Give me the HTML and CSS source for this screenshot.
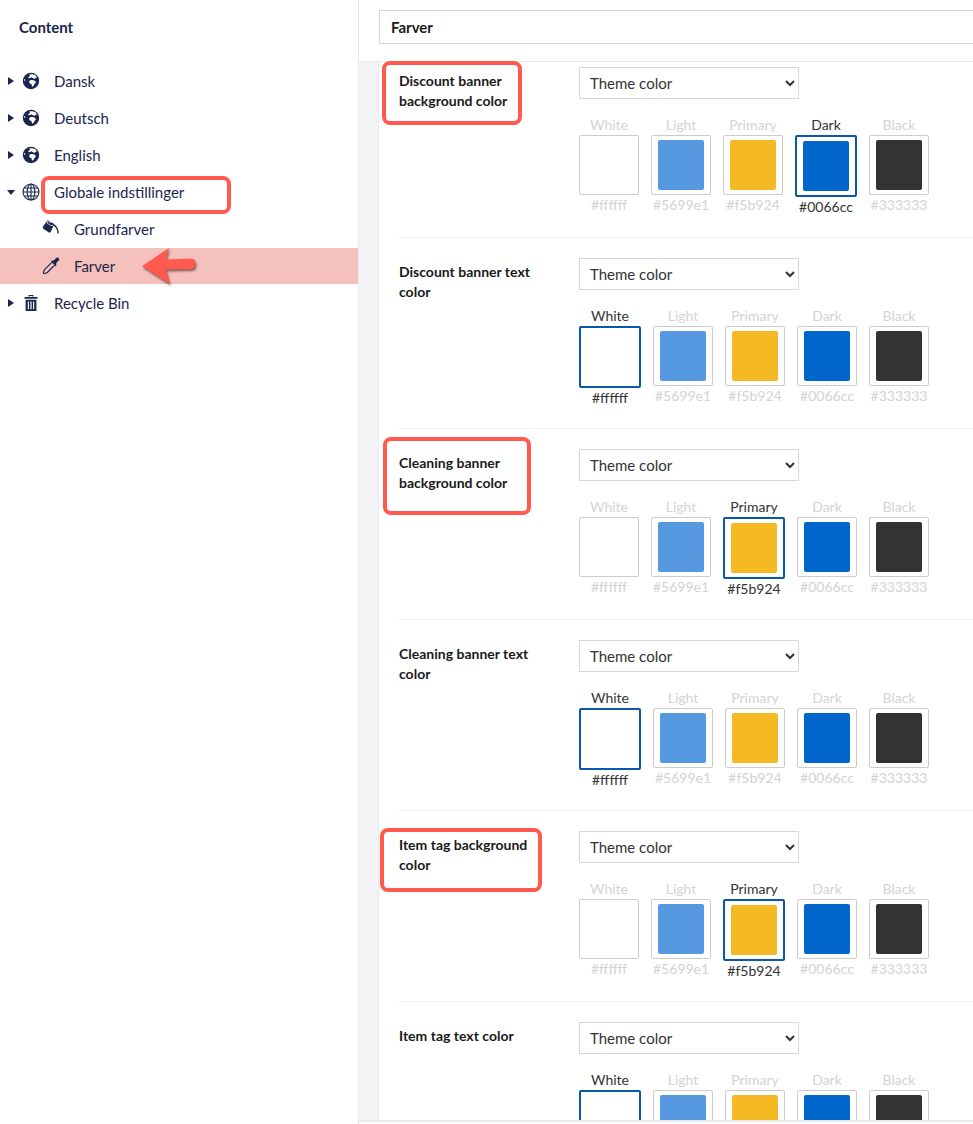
FILE: index.html
```html
<!DOCTYPE html>
<html lang="da">
<head>
<meta charset="utf-8">
<title>Farver</title>
<link rel="stylesheet" href="styles.css">
</head>
<body>
<svg class="defs" width="0" height="0" aria-hidden="true">
  <symbol id="earth" viewBox="0 0 18 18">
    <circle cx="9" cy="9" r="8.2" fill="#1b264f"/>
    <path fill="#fff" d="M8.2 8.2c1-.5 2.2-.2 3.3 0 1 .2 1.2.7 1.6 1.2l1 .3c-.3 1.2-1 1.5-1.7 2.3-.3.6-.3 1.5-1 2-.6.5-1.2.8-1.4.2-.4-1-.2-1.8-.8-2.5-.9 0-1.8-.4-2-1.3-.2-.9.2-1.6 1-2.2z"/>
    <path fill="#fff" d="M7.4 2.5c1-.4 2.400-.5 3.500-.2.3.6.9.5 1.700.5.9.6 1.800 1.500 2.300 2.600l-1.400.3-.6 1.300c-.6-.6-1.300-.9-2-.8-.6-.6-1.300-.5-1.700-1-.5.3-.9.9-1.600 1-.3-.5-.8-.3-1.200 0-.3-.4-.2-1 .3-1.500.5-.3 1-.5 1.300-1 .2-.3 0-.5-.6-.7z"/>
    <path fill="#fff" d="M1.900 7.500c.5-.3 1-.2 1.300.2.300.5.100 1-.4 1.200-.4-.1-.8-.6-.9-1.400z"/>
  </symbol>
  <symbol id="web" viewBox="0 0 18 18">
    <g fill="none" stroke="#1b264f" stroke-width="1.100">
      <circle cx="9" cy="9" r="8"/>
      <ellipse cx="9" cy="9" rx="3.800" ry="8"/>
      <path d="M9 1v16M1 9h16M2.200 5h13.600M2.200 13h13.600"/>
    </g>
  </symbol>
  <symbol id="bucket" viewBox="0 0 18 18">
    <path fill="#1b264f" d="M1 6.500 5 .9c.6-.6 1.400-.4 2.300 0l3.200 2c1 .7 1.500 1.300 1.300 2.200L8.600 12.200c-.5.500-1.400.400-2 .1l-4.600-3C.9 8.500.6 7.500 1 6.500z"/>
    <ellipse cx="8" cy="3.600" rx="1.500" ry="3.600" fill="#fff" transform="rotate(-57 8 3.600)"/>
    <ellipse cx="7.800" cy="3.500" rx=".9" ry="2.700" fill="#1b264f" transform="rotate(-57 7.800 3.500)"/>
    <path fill="none" stroke="#1b264f" stroke-width="1.400" d="M9 3.500c2.500.5 4.500 2.500 6 5 .8 1.300 1.200 2.500 1 5"/>
  </symbol>
  <symbol id="dropper" viewBox="0 0 18 18">
    <path fill="#1b264f" d="M10.300 3.700 12.300 3l1.700-2c.8-.8 2-.7 2.700 0 .7.800.7 2-.1 2.700l-2 1.800-.6 2 .7.700-1.100 1.100-4.700-4.700 1.100-1.100z"/>
    <path fill="none" stroke="#1b264f" stroke-width="1.200" stroke-linejoin="round" d="M9.600 5.600 2.500 12.700c-.7.700-.3 1.200-.7 2-.4.600-.7 1-.1 1.600s1 .2 1.600-.1c.8-.4 1.300 0 2-.7l7.100-7.100"/>
  </symbol>
  <symbol id="trash" viewBox="0 0 18 18">
    <path fill="#1b264f" d="M2.500 3h13v1.800h-13zM6.500 1h5v1.500h-1.300v-.4H7.800v.4H6.500zM3.600 5.700h10.800V17H3.600zM5.800 7.400v7.900h1.100V7.400zm2.600 0v7.900h1.200V7.400zm2.700 0v7.900h1.100V7.400z"/>
  </symbol>
</svg>

<div class="app">
  <aside class="sidebar">
    <h1 class="sidebar-title">Content</h1>
    <ul class="tree">
      <li class="node"><span class="caret"></span><svg class="node-icon"><use href="#earth"/></svg><span>Dansk</span></li>
      <li class="node"><span class="caret"></span><svg class="node-icon"><use href="#earth"/></svg><span>Deutsch</span></li>
      <li class="node"><span class="caret"></span><svg class="node-icon"><use href="#earth"/></svg><span>English</span></li>
      <li class="node"><span class="caret caret-open"></span><svg class="node-icon"><use href="#web"/></svg><span>Globale indstillinger</span></li>
      <li class="node node-child"><span class="caret caret-none"></span><svg class="node-icon"><use href="#bucket"/></svg><span>Grundfarver</span></li>
      <li class="node node-child node-active"><span class="caret caret-none"></span><svg class="node-icon"><use href="#dropper"/></svg><span>Farver</span></li>
      <li class="node"><span class="caret"></span><svg class="node-icon"><use href="#trash"/></svg><span>Recycle Bin</span></li>
    </ul>
  </aside>

  <main class="main">
    <header class="main-header">
      <input class="name-input" type="text" value="Farver">
    </header>
    <div class="main-body">
      <div class="gutter"></div>
      <div class="rows">

        <section class="row">
          <div class="row-label">Discount banner background color</div>
          <div class="row-editor">
            <select class="type-select"><option>Theme color</option></select>
            <div class="swatches">
              <div class="swatch"><span class="swatch-name">White</span><span class="swatch-box"><i class="chip chip-white"></i></span><span class="swatch-hex">#ffffff</span></div>
              <div class="swatch"><span class="swatch-name">Light</span><span class="swatch-box"><i class="chip chip-light"></i></span><span class="swatch-hex">#5699e1</span></div>
              <div class="swatch"><span class="swatch-name">Primary</span><span class="swatch-box"><i class="chip chip-primary"></i></span><span class="swatch-hex">#f5b924</span></div>
              <div class="swatch swatch-on"><span class="swatch-name">Dark</span><span class="swatch-box"><i class="chip chip-dark"></i></span><span class="swatch-hex">#0066cc</span></div>
              <div class="swatch"><span class="swatch-name">Black</span><span class="swatch-box"><i class="chip chip-black"></i></span><span class="swatch-hex">#333333</span></div>
            </div>
          </div>
        </section>

        <section class="row">
          <div class="row-label">Discount banner text color</div>
          <div class="row-editor">
            <select class="type-select"><option>Theme color</option></select>
            <div class="swatches">
              <div class="swatch swatch-on"><span class="swatch-name">White</span><span class="swatch-box"><i class="chip chip-white"></i></span><span class="swatch-hex">#ffffff</span></div>
              <div class="swatch"><span class="swatch-name">Light</span><span class="swatch-box"><i class="chip chip-light"></i></span><span class="swatch-hex">#5699e1</span></div>
              <div class="swatch"><span class="swatch-name">Primary</span><span class="swatch-box"><i class="chip chip-primary"></i></span><span class="swatch-hex">#f5b924</span></div>
              <div class="swatch"><span class="swatch-name">Dark</span><span class="swatch-box"><i class="chip chip-dark"></i></span><span class="swatch-hex">#0066cc</span></div>
              <div class="swatch"><span class="swatch-name">Black</span><span class="swatch-box"><i class="chip chip-black"></i></span><span class="swatch-hex">#333333</span></div>
            </div>
          </div>
        </section>

        <section class="row">
          <div class="row-label">Cleaning banner background color</div>
          <div class="row-editor">
            <select class="type-select"><option>Theme color</option></select>
            <div class="swatches">
              <div class="swatch"><span class="swatch-name">White</span><span class="swatch-box"><i class="chip chip-white"></i></span><span class="swatch-hex">#ffffff</span></div>
              <div class="swatch"><span class="swatch-name">Light</span><span class="swatch-box"><i class="chip chip-light"></i></span><span class="swatch-hex">#5699e1</span></div>
              <div class="swatch swatch-on"><span class="swatch-name">Primary</span><span class="swatch-box"><i class="chip chip-primary"></i></span><span class="swatch-hex">#f5b924</span></div>
              <div class="swatch"><span class="swatch-name">Dark</span><span class="swatch-box"><i class="chip chip-dark"></i></span><span class="swatch-hex">#0066cc</span></div>
              <div class="swatch"><span class="swatch-name">Black</span><span class="swatch-box"><i class="chip chip-black"></i></span><span class="swatch-hex">#333333</span></div>
            </div>
          </div>
        </section>

        <section class="row">
          <div class="row-label">Cleaning banner text color</div>
          <div class="row-editor">
            <select class="type-select"><option>Theme color</option></select>
            <div class="swatches">
              <div class="swatch swatch-on"><span class="swatch-name">White</span><span class="swatch-box"><i class="chip chip-white"></i></span><span class="swatch-hex">#ffffff</span></div>
              <div class="swatch"><span class="swatch-name">Light</span><span class="swatch-box"><i class="chip chip-light"></i></span><span class="swatch-hex">#5699e1</span></div>
              <div class="swatch"><span class="swatch-name">Primary</span><span class="swatch-box"><i class="chip chip-primary"></i></span><span class="swatch-hex">#f5b924</span></div>
              <div class="swatch"><span class="swatch-name">Dark</span><span class="swatch-box"><i class="chip chip-dark"></i></span><span class="swatch-hex">#0066cc</span></div>
              <div class="swatch"><span class="swatch-name">Black</span><span class="swatch-box"><i class="chip chip-black"></i></span><span class="swatch-hex">#333333</span></div>
            </div>
          </div>
        </section>

        <section class="row">
          <div class="row-label">Item tag background color</div>
          <div class="row-editor">
            <select class="type-select"><option>Theme color</option></select>
            <div class="swatches">
              <div class="swatch"><span class="swatch-name">White</span><span class="swatch-box"><i class="chip chip-white"></i></span><span class="swatch-hex">#ffffff</span></div>
              <div class="swatch"><span class="swatch-name">Light</span><span class="swatch-box"><i class="chip chip-light"></i></span><span class="swatch-hex">#5699e1</span></div>
              <div class="swatch swatch-on"><span class="swatch-name">Primary</span><span class="swatch-box"><i class="chip chip-primary"></i></span><span class="swatch-hex">#f5b924</span></div>
              <div class="swatch"><span class="swatch-name">Dark</span><span class="swatch-box"><i class="chip chip-dark"></i></span><span class="swatch-hex">#0066cc</span></div>
              <div class="swatch"><span class="swatch-name">Black</span><span class="swatch-box"><i class="chip chip-black"></i></span><span class="swatch-hex">#333333</span></div>
            </div>
          </div>
        </section>

        <section class="row">
          <div class="row-label">Item tag text color</div>
          <div class="row-editor">
            <select class="type-select"><option>Theme color</option></select>
            <div class="swatches">
              <div class="swatch swatch-on"><span class="swatch-name">White</span><span class="swatch-box"><i class="chip chip-white"></i></span><span class="swatch-hex">#ffffff</span></div>
              <div class="swatch"><span class="swatch-name">Light</span><span class="swatch-box"><i class="chip chip-light"></i></span><span class="swatch-hex">#5699e1</span></div>
              <div class="swatch"><span class="swatch-name">Primary</span><span class="swatch-box"><i class="chip chip-primary"></i></span><span class="swatch-hex">#f5b924</span></div>
              <div class="swatch"><span class="swatch-name">Dark</span><span class="swatch-box"><i class="chip chip-dark"></i></span><span class="swatch-hex">#0066cc</span></div>
              <div class="swatch"><span class="swatch-name">Black</span><span class="swatch-box"><i class="chip chip-black"></i></span><span class="swatch-hex">#333333</span></div>
            </div>
          </div>
        </section>

      </div>
    </div>
    <div class="main-foot"></div>
  </main>

  <div class="mark mark-globale"></div>
  <div class="mark mark-discount"></div>
  <div class="mark mark-cleaning"></div>
  <div class="mark mark-item"></div>
  <svg class="arrow" viewBox="0 0 56 38" width="56" height="38" aria-hidden="true">
    <path fill="#ff5a4d" d="M0 18 27 0 24 11.500 49 10.500c3 0 4.500 2 4.500 5s-1.500 5.500-4.500 5.500L24 21.500 28 36z"/>
  </svg>
</div>
</body>
</html>
```

FILE: styles.css
```css
* { box-sizing: border-box; }

html, body {
  margin: 0;
  height: 100%;
  overflow: hidden;
  background: #fff;
}

body {
  font-family: Lato, "Open Sans", sans-serif;
  font-size: 15px;
  color: #1b264f;
}

.defs { position: absolute; }

.app {
  position: relative;
  display: flex;
  height: 1124px;
}

/* Sidebar */
.sidebar {
  flex: 0 0 359px;
  border-right: 1px solid #e9e9eb;
}

.sidebar-title {
  margin: 0;
  height: 63px;
  padding: 17px 0 0 19px;
  font-size: 15px;
  line-height: 20px;
  font-weight: 700;
}

.tree {
  list-style: none;
  margin: 0;
  padding: 0;
  display: flex;
  flex-direction: column;
  gap: 1px;
}

.node {
  display: flex;
  align-items: center;
  height: 36px;
  padding-left: 8px;
  line-height: 20px;
}

.node-child { padding-left: 28px; }
.node-active { background: #f5c1bc; }

.caret {
  flex: 0 0 6px;
  width: 6px;
  height: 8px;
  margin-right: 8px;
  border-style: solid;
  border-width: 4px 0 4px 6px;
  border-color: transparent transparent transparent #1b264f;
}

.caret-open {
  flex-basis: 8px;
  width: 8px;
  height: 5px;
  margin-left: -1px;
  margin-right: 7px;
  border-width: 5px 4px 0 4px;
  border-color: #1b264f transparent transparent transparent;
}

.caret-none { border: 0; }

.node-icon {
  flex: 0 0 18px;
  width: 18px;
  height: 18px;
  margin-right: 14px;
}

/* Main */
.main {
  flex: 1 1 0;
  min-width: 0;
  display: flex;
  flex-direction: column;
  overflow: hidden;
}

.main-header {
  flex: 0 0 62px;
  padding: 10px 0 0 20px;
  border-bottom: 1px solid #e9e9eb;
}

.name-input {
  display: block;
  width: calc(100% + 20px);
  height: 34px;
  padding: 0 11px;
  border: 1px solid #d8d7d9;
  border-radius: 0;
  outline: 0;
  background: #fff;
  font: 700 15px/20px Lato, sans-serif;
  color: #1a1a1a;
}

.main-body {
  flex: 1 1 0;
  min-height: 0;
  display: flex;
  overflow: hidden;
}

.gutter {
  flex: 0 0 20px;
  background: #f4f3f5;
  border-right: 1px solid #e9e9eb;
}

.rows {
  flex: 1 1 0;
  min-width: 0;
  padding-left: 20px;
}

.main-foot {
  flex: 0 0 4px;
  border-top: 2px solid #e9e9eb;
}

.row {
  display: flex;
  padding: 20px 0;
  border-bottom: 1px solid #f0f0f1;
}

.row:first-child { padding-top: 5px; }

.row-label {
  flex: 0 0 180px;
  padding: 4px 40px 0 0;
  font-size: 14px;
  line-height: 20px;
  font-weight: 700;
  color: #1a1a1a;
}

.type-select {
  display: block;
  width: 220px;
  height: 32px;
  padding: 0 6px;
  border: 1px solid #d8d7d9;
  border-radius: 0;
  background-color: #fff;
  font: 15px Lato, sans-serif;
  color: #333;
}

.swatches {
  display: flex;
  align-items: flex-start;
  gap: 12px;
  margin-top: 16px;
}

.swatch {
  display: flex;
  flex-direction: column;
  align-items: center;
  font-size: 14px;
  line-height: 20px;
  color: #d3d3d3;
}

.swatch-name, .swatch-hex { white-space: nowrap; }

.swatch-box {
  display: block;
  width: 60px;
  height: 60px;
  padding: 4px 6px;
  border: 1px solid #ccc;
  border-radius: 2px;
  background: #fff;
}

.chip {
  display: block;
  width: 46px;
  height: 50px;
  border-radius: 2px;
}

.chip-white { background: #fff; }
.chip-light { background: #5699e1; }
.chip-primary { background: #f5b924; }
.chip-dark { background: #0066cc; }
.chip-black { background: #333; }

.swatch-on { color: #333; }
.swatch-on .swatch-box {
  width: 62px;
  height: 62px;
  padding: 4px 6px;
  border: 2px solid #0a58ad;
  border-radius: 2px;
}

/* Annotations over the screenshot */
.mark {
  position: absolute;
  border: 4px solid #ff5a4d;
  border-radius: 8px;
}

.mark-globale { left: 41px; top: 176px; width: 190px; height: 38px; }
.mark-discount { left: 382px; top: 61px; width: 140px; height: 64px; }
.mark-cleaning { left: 383px; top: 437px; width: 148px; height: 78px; }
.mark-item { left: 380px; top: 828px; width: 162px; height: 64px; }

.arrow {
  position: absolute;
  left: 142px;
  top: 248px;
  overflow: visible;
  filter: drop-shadow(1px 2px 1px rgba(70, 40, 40, .65));
}
```
